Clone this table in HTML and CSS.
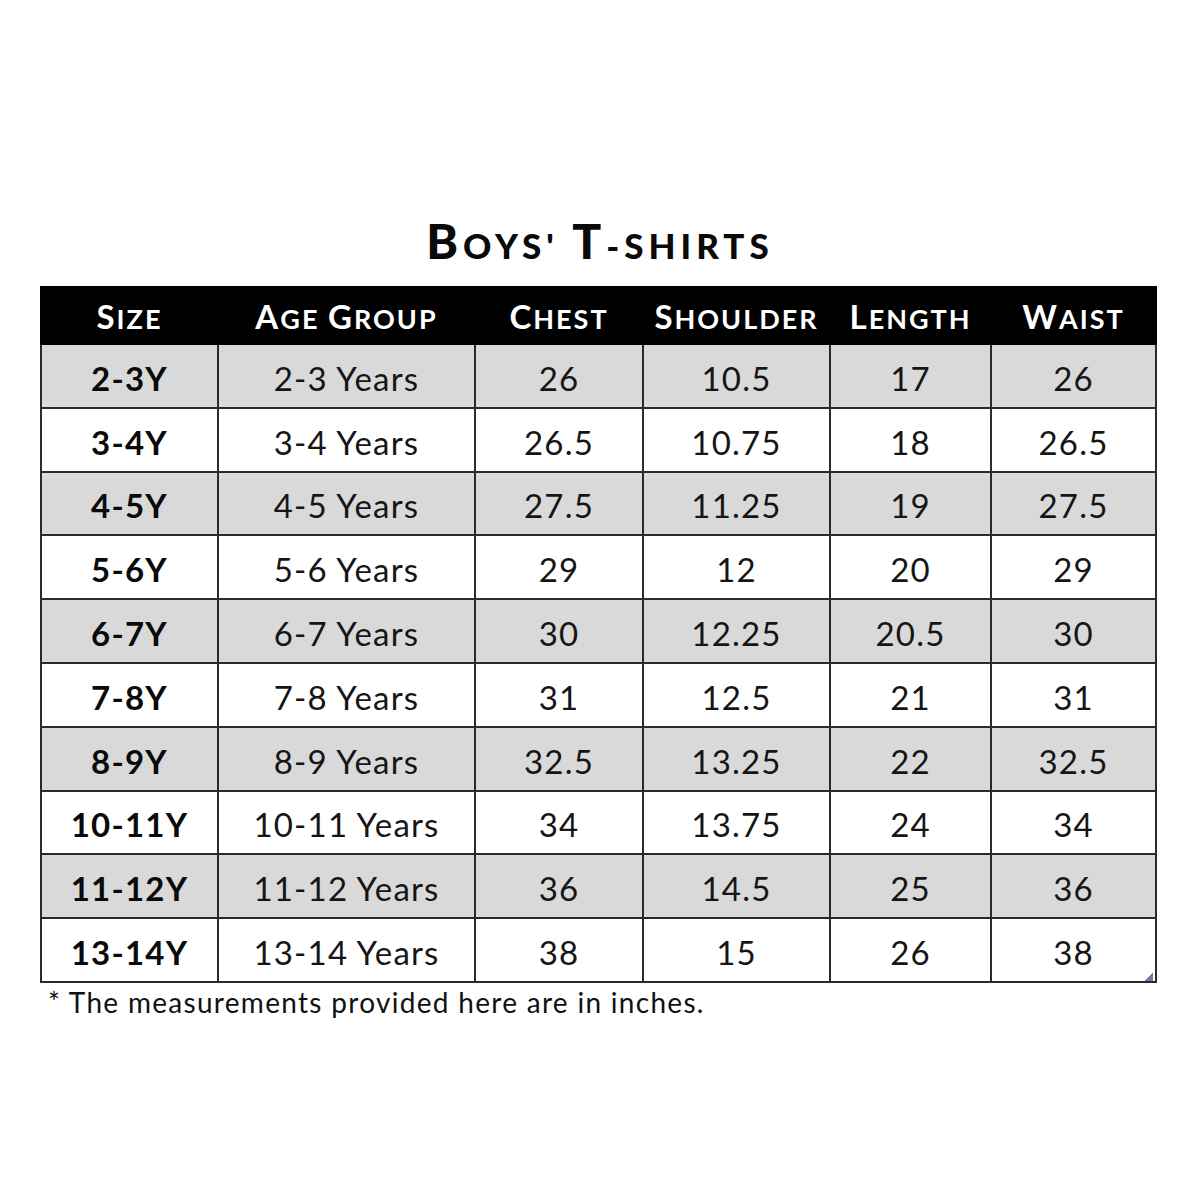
FILE: index.html
```html
<!DOCTYPE html>
<html>
<head>
<meta charset="utf-8">
<link rel="stylesheet" href="styles.css">
</head>
<body>
<div class="page">
  <h1 class="title"><span class="tcap">B</span>oys' <span class="tcap">T</span>-shirts</h1>
  <div class="table-wrap">
    <table class="chart">
      <colgroup>
        <col class="c1"><col class="c2"><col class="c3"><col class="c4"><col class="c5"><col class="c6">
      </colgroup>
      <thead>
        <tr>
          <th><span class="cap">S</span>ize</th>
          <th><span class="cap">A</span>ge <span class="cap">G</span>roup</th>
          <th><span class="cap">C</span>hest</th>
          <th><span class="cap">S</span>houlder</th>
          <th><span class="cap">L</span>ength</th>
          <th><span class="cap">W</span>aist</th>
        </tr>
      </thead>
      <tbody>
        <tr class="alt"><td class="sz">2-3Y</td><td>2-3 Years</td><td>26</td><td>10.5</td><td>17</td><td>26</td></tr>
        <tr><td class="sz">3-4Y</td><td>3-4 Years</td><td>26.5</td><td>10.75</td><td>18</td><td>26.5</td></tr>
        <tr class="alt"><td class="sz">4-5Y</td><td>4-5 Years</td><td>27.5</td><td>11.25</td><td>19</td><td>27.5</td></tr>
        <tr><td class="sz">5-6Y</td><td>5-6 Years</td><td>29</td><td>12</td><td>20</td><td>29</td></tr>
        <tr class="alt"><td class="sz">6-7Y</td><td>6-7 Years</td><td>30</td><td>12.25</td><td>20.5</td><td>30</td></tr>
        <tr><td class="sz">7-8Y</td><td>7-8 Years</td><td>31</td><td>12.5</td><td>21</td><td>31</td></tr>
        <tr class="alt"><td class="sz">8-9Y</td><td>8-9 Years</td><td>32.5</td><td>13.25</td><td>22</td><td>32.5</td></tr>
        <tr><td class="sz">10-11Y</td><td>10-11 Years</td><td>34</td><td>13.75</td><td>24</td><td>34</td></tr>
        <tr class="alt"><td class="sz">11-12Y</td><td>11-12 Years</td><td>36</td><td>14.5</td><td>25</td><td>36</td></tr>
        <tr><td class="sz">13-14Y</td><td>13-14 Years</td><td>38</td><td>15</td><td>26</td><td>38</td></tr>
      </tbody>
    </table>
    <span class="grip"></span>
  </div>
  <p class="note">* The measurements provided here are in inches.</p>
</div>
</body>
</html>
```
FILE: styles.css
```css
html, body {
  margin: 0;
  padding: 0;
  background: #ffffff;
}
body {
  font-family: Lato, "Open Sans", "Liberation Sans", sans-serif;
  color: #111111;
}
.page {
  width: 1200px;
  height: 1200px;
  padding-top: 213px;
  box-sizing: border-box;
}
.title {
  margin: 0;
  text-align: center;
  font-size: 35px;
  line-height: 56px;
  height: 73px;
  font-weight: 900;
  text-transform: uppercase;
  letter-spacing: 5px;
  color: #0a0a0a;
}
.title .tcap {
  font-size: 48px;
}
.table-wrap {
  position: relative;
  margin-left: 40px;
  width: 1115px;
}
.chart {
  border-collapse: collapse;
  table-layout: fixed;
  width: 1115px;
  border: 2px solid #2a2a2a;
}
.c1 { width: 177px; }
.c2 { width: 257px; }
.c3 { width: 168px; }
.c4 { width: 187px; }
.c5 { width: 161px; }
.c6 { width: 165px; }
.chart th {
  background: #000000;
  color: #ffffff;
  height: 55px;
  padding: 0;
  font-size: 27px;
  font-weight: 700;
  text-transform: uppercase;
  letter-spacing: 2px;
  text-align: center;
  white-space: nowrap;
  border: 2px solid #000000;
}
.chart th .cap {
  font-size: 33px;
}
.chart td {
  height: 57.8px;
  padding: 4px 0 0 0;
  text-align: center;
  font-size: 33px;
  letter-spacing: 1.2px;
  color: #151515;
  border: 2px solid #2a2a2a;
  white-space: nowrap;
}
.chart tr.alt td {
  background: #d9d9d9;
}
.chart td.sz {
  font-weight: 700;
  color: #0a0a0a;
}
.grip {
  position: absolute;
  right: 2px;
  bottom: 2px;
  width: 9px;
  height: 9px;
  background: linear-gradient(135deg, transparent 50%, #6f7f9c 50%);
}
.note {
  margin: 2px 0 0 48px;
  font-size: 28px;
  line-height: 34px;
  letter-spacing: 1.3px;
  color: #111111;
}
```
